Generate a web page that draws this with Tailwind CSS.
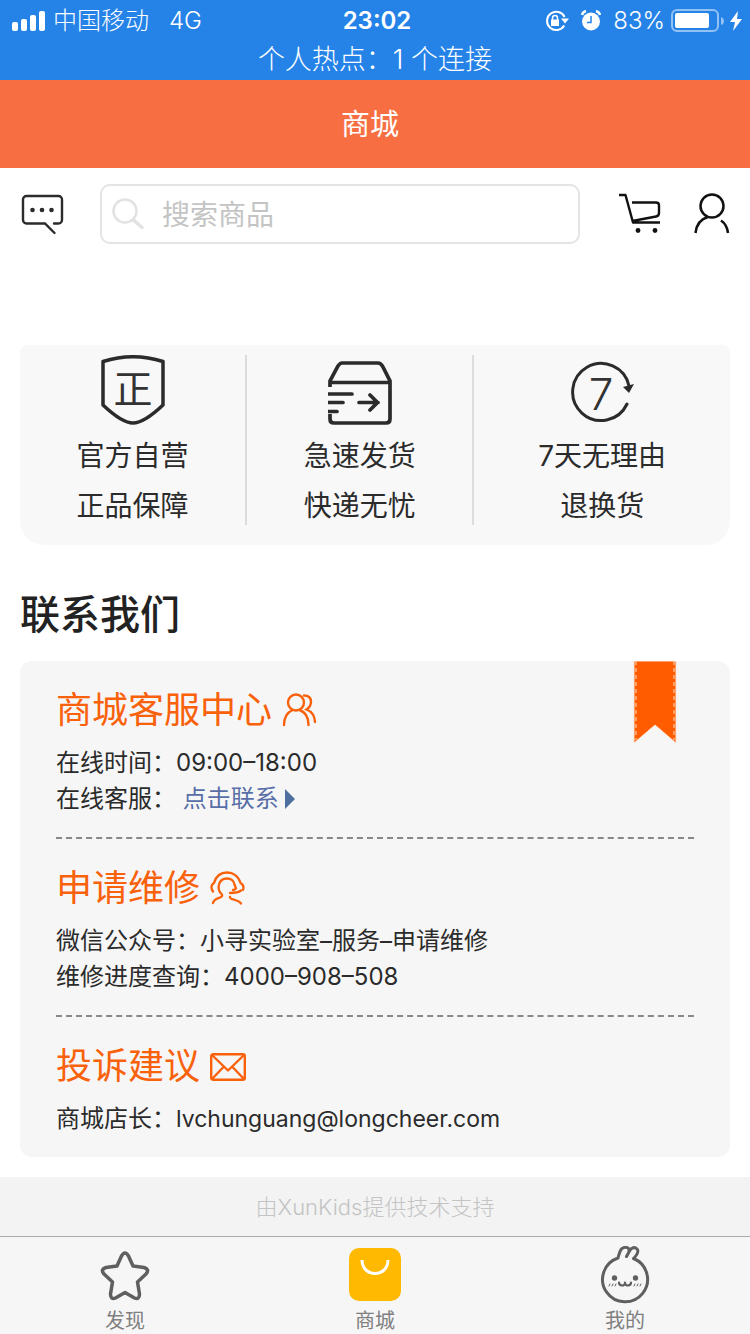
<!DOCTYPE html>
<html lang="zh-CN">
<head>
<meta charset="utf-8">
<meta name="viewport" content="width=device-width, initial-scale=1">
<title>商城</title>
<script src="https://cdn.jsdelivr.net/npm/@tailwindcss/browser@4"></script>
</head>
<body class="flex min-h-screen flex-col bg-white font-['Inter','Noto_Sans_CJK_SC',sans-serif] font-normal text-[#2b2b2b]">

<div class="flex h-20 flex-col bg-[#2583e8] font-light text-white">
  <div class="grid h-[42px] grid-cols-[1fr_auto_1fr] items-center pl-3 pr-2 text-2xl leading-10">
    <div class="flex items-center gap-2">
      <svg class="h-5 w-[33px]" viewBox="0 0 33 20" fill="currentColor" aria-hidden="true">
        <rect x="0" y="11" width="6" height="9" rx="2"/><rect x="9" y="8" width="6" height="12" rx="2"/><rect x="18" y="4" width="6" height="16" rx="2"/><rect x="27" y="0" width="6" height="20" rx="2"/>
      </svg>
      <span>中国移动</span>
      <span class="ml-3">4G</span>
    </div>
    <span class="font-semibold">23:02</span>
    <div class="flex items-center justify-end">
      <svg class="mr-3 h-6 w-6" viewBox="0 0 24 24" fill="none" stroke="currentColor" stroke-width="2" aria-hidden="true">
        <path d="M19.200 16.500A9.200 9.200 0 1 1 19.600 8"/><path d="M16 9.500h8l-4 5z" fill="currentColor" stroke="none"/>
        <rect x="6" y="10.500" width="8" height="6.500" fill="currentColor" stroke="none"/><path d="M7.500 11V9a2.500 2.500 0 0 1 5 0v2" stroke-width="1.500"/>
      </svg>
      <svg class="mr-3 h-6 w-5" viewBox="0 0 20 24" fill="none" stroke="currentColor" aria-hidden="true">
        <circle cx="10" cy="12.500" r="9" fill="currentColor" stroke="none"/><path d="M1 6Q1.500 3 5 2M19 6Q18.500 3 15 2" stroke-width="2.500"/>
        <path d="M10 7v6.500H6" stroke="#2583e8" stroke-width="1.500"/>
      </svg>
      <span class="mr-[6px]">83%</span>
      <svg class="mr-[6px] h-6 w-[53px]" viewBox="0 0 53 24" fill="none" aria-hidden="true">
        <rect x="1" y="1" width="46" height="21" rx="5" stroke="#92c1f3" stroke-width="2"/><rect x="4" y="4" width="34" height="15" rx="2" fill="#fff"/><path d="M50 8q3 1 3 4t-3 4z" fill="#92c1f3"/>
      </svg>
      <svg class="h-5 w-3" viewBox="0 0 12 20" fill="currentColor" aria-hidden="true"><path d="M8 0 0 11h5L3 20 12 8H7z"/></svg>
    </div>
  </div>
  <p class="text-center text-[27px] leading-9">个人热点：1 个连接</p>
</div>

<header class="flex h-[88px] items-center justify-center bg-[#f76e42] pt-[2px] pr-[10px] text-white">
  <h1 class="text-[29px]">商城</h1>
</header>

<main class="flex grow flex-col">
  <form class="flex items-center px-5 pt-4" role="search">
    <button type="button" aria-label="消息">
      <svg class="h-11 w-11" viewBox="0 0 44 44" fill="none" stroke="#2b2b2b" stroke-width="2.400" stroke-linecap="round">
        <path d="M34 31.500h4.500a3.500 3.500 0 0 0 3.500-3.500V7.500A3.500 3.500 0 0 0 38.500 4h-32A3.500 3.500 0 0 0 3 7.500V28a3.500 3.500 0 0 0 3.500 3.500H25l9.500 9.500"/>
        <g fill="#2b2b2b" stroke="none"><circle cx="12.500" cy="18" r="2.300"/><circle cx="22" cy="18" r="2.300"/><circle cx="31.500" cy="18" r="2.300"/></g>
      </svg>
    </button>
    <label class="ml-9 flex h-[60px] grow items-center gap-[14px] rounded-[10px] border-2 border-[#e4e4e4] px-[10px]">
      <svg class="h-9 w-9 shrink-0" viewBox="0 0 36 36" fill="none" stroke="#e2e2e2" aria-hidden="true"><circle cx="13" cy="15" r="11.500" stroke-width="2.500"/><path d="M21.500 24 30 31.500" stroke-width="3.500" stroke-linecap="round"/></svg>
      <input type="search" aria-label="搜索商品" placeholder="搜索商品" class="w-full min-w-0 bg-transparent pt-[2px] text-[28px] outline-none placeholder:text-[#c4c4c4]">
    </label>
    <button type="button" aria-label="购物车" class="ml-9">
      <svg class="h-11 w-12" viewBox="0 0 48 44" fill="none" stroke="#111" stroke-width="2.400" stroke-linejoin="round">
        <path d="M3 3h6.500L17 30.500h27M16 10.500h24q3 0 3 3v7.500q0 3-3 3.500L16.500 29"/>
        <g fill="#111" stroke="none"><circle cx="22" cy="38.500" r="2.400"/><circle cx="39" cy="38.500" r="2.400"/></g>
      </svg>
    </button>
    <button type="button" aria-label="个人中心" class="ml-[26px]">
      <svg class="h-11 w-10" viewBox="0 0 40 44" fill="none" stroke="#111" stroke-width="2.500">
        <circle cx="22" cy="14" r="11.500"/><path d="M5.500 41Q7 28 18 25M31 28.500q6 4 7 12.500"/>
      </svg>
    </button>
  </form>

  <ul class="mx-5 mt-[101px] grid grid-cols-[8fr_8fr_9fr] rounded-t-lg rounded-b-3xl bg-[#f8f8f8] pt-[10px] pb-5 text-center text-[28px] leading-[38px]">
    <li class="flex flex-col items-center gap-3 border-r-2 border-[#dcdcdc]">
      <svg class="h-[70px] w-16" viewBox="0 0 64 70" fill="none" stroke="#2b2b2b" stroke-width="3.500" stroke-linejoin="round" aria-hidden="true">
        <path d="M2 6.500Q32-3 62 6.500V50Q43 68 32 68T2 50z"/>
        <text x="32" y="48" text-anchor="middle" font-size="39" fill="#333" stroke="none">正</text>
      </svg>
      <span>官方自营</span><span>正品保障</span>
    </li>
    <li class="flex flex-col items-center gap-3 border-r-2 border-[#dcdcdc]">
      <svg class="h-[70px] w-16" viewBox="0 0 64 70" fill="none" stroke="#2b2b2b" stroke-width="3.700" aria-hidden="true">
        <path d="M2 32v-6L10 11q2-3 4-3h36q3 0 5 4l7 14v38q0 4-4 4H6q-4 0-4-4v-5M2 27.500h60"/>
        <path d="M0 39h24M0 47.500h15M0 56.500h9M31 47.500h19M42 40l7.500 7.500L42 55" stroke-linecap="round"/>
      </svg>
      <span>急速发货</span><span>快递无忧</span>
    </li>
    <li class="flex flex-col items-center gap-3">
      <svg class="h-[70px] w-16" viewBox="0 0 64 70" fill="none" stroke="#2b2b2b" stroke-width="3" aria-hidden="true">
        <path d="M57 49A28.500 28.500 0 1 1 59 31" stroke-linecap="round"/><path d="m53 32 11-3-5 9z" fill="#2b2b2b" stroke="none"/>
        <text x="31" y="55" text-anchor="middle" font-size="44" font-weight="300" fill="#333" stroke="none">7</text>
      </svg>
      <span>7天无理由</span><span>退换货</span>
    </li>
  </ul>

  <h2 class="mx-5 mt-10 mb-4 text-[40px] leading-[60px] font-medium text-[#222]">联系我们</h2>

  <div class="relative mx-5 rounded-xl bg-[#f6f6f6] px-9 text-2xl leading-9">
    <svg class="absolute top-0 right-[53px] h-[84px] w-11" viewBox="0 0 44 84" aria-hidden="true">
      <path d="M1 0h42v82L22 64 1 82z" fill="#ff5c00" stroke="#ffe3d1" stroke-width="1"/><path d="M3 0v79M41 0v79" stroke="#ffc9a3" stroke-width="1.200" stroke-dasharray="4 3"/>
    </svg>
    <section class="border-b-2 border-dashed border-[#888] pt-[22px] pb-5">
      <h3 class="mb-2 flex items-center gap-[10px] text-4xl leading-[54px] font-normal text-[#f9610a]">商城客服中心
        <svg class="h-9 w-9" viewBox="0 0 36 36" fill="none" stroke="currentColor" stroke-width="2.400" stroke-linecap="round" aria-hidden="true">
          <circle cx="14" cy="10.500" r="8"/><path d="M2 33q0-11 8.500-15M17.500 18Q26.500 21 26.500 33M22 3.500q7 0 7 6.500 0 4.500-4.500 7.500 8 3 8.500 12.500"/>
        </svg>
      </h3>
      <p>在线时间：09:00–18:00</p>
      <p>在线客服： <a href="#" class="inline-flex items-center gap-[6px] text-[#586fa8]">点击联系<svg class="h-5 w-[11px]" viewBox="0 0 11 20" fill="#4f6f9f" aria-hidden="true"><path d="M0 0v20l10-10z"/></svg></a></p>
    </section>
    <section class="border-b-2 border-dashed border-[#888] pt-[22px] pb-5">
      <h3 class="mb-2 flex items-center gap-[10px] text-4xl leading-[54px] font-normal text-[#f9610a]">申请维修
        <svg class="h-9 w-9" viewBox="0 0 36 36" fill="none" stroke="currentColor" stroke-width="2.300" stroke-linecap="round" stroke-linejoin="round" aria-hidden="true">
          <path d="M3 21.500C0 17 2 14 4 13 6 6 11 2.500 17 2.500S28.500 6 30.500 13c3 1.500 3.500 4 2.500 7"/>
          <path d="M3 33c.5-3.500 4-4.500 7-5.500 2-.7 2.500-2 2-3C8.500 21.500 8 18 9 14.500 10 10.500 13 8.500 17 8.500s7 2.500 7.500 6l1.500 4q-1.500 1.500-3 1.500M31 20.500c-3 2.500-6 2.500-11 2.500M20 27c0 2 2 2 5 3s5 1.500 6 3.500"/>
        </svg>
      </h3>
      <p>微信公众号：小寻实验室–服务–申请维修</p>
      <p>维修进度查询：4000–908–508</p>
    </section>
    <section class="pt-[22px] pb-5">
      <h3 class="mb-2 flex items-center gap-[10px] text-4xl leading-[54px] font-normal text-[#f9610a]">投诉建议
        <svg class="mt-[2px] h-7 w-9" viewBox="0 0 36 28" fill="none" stroke="currentColor" stroke-width="2.400" stroke-linejoin="round" aria-hidden="true">
          <rect x="1.200" y="1.200" width="33.600" height="25.600" rx="2"/><path d="m2 2 16 15.500L34 2M2 26l11.500-12M34 26 22.500 14"/>
        </svg>
      </h3>
      <p>商城店长：<span class="text-[23px]">lvchunguang@longcheer.com</span></p>
    </section>
  </div>

  <footer class="mt-5 flex h-[59px] grow items-center justify-center bg-[#f3f3f3] pt-[2px] text-[22px] font-light text-[#c4c4c4]">由XunKids提供技术支持</footer>
</main>

<nav class="grid h-[98px] grid-cols-3 border-t border-[#aaa] bg-[#f6f6f6] text-xl leading-7 text-[#808080]">
  <a href="#" class="flex flex-col items-center pt-[9px]">
    <svg class="h-[61px] w-[60px]" viewBox="0 0 60 61" fill="none" stroke="#5f5f5f" stroke-width="3.500" stroke-linejoin="round" aria-hidden="true">
      <path d="M26.500 10Q30 4 33.500 10L38 20 49 21.500Q55 23.500 51 28L42.500 36 44.500 48Q44.500 54 39.500 52L30 46.500 20.500 52Q15.500 54 15.500 48L17.500 36 9 28Q5 23.500 11 21.500L22 20z"/>
    </svg>发现
  </a>
  <a href="#" aria-current="page" class="flex flex-col items-center pt-[9px]">
    <svg class="h-[61px] w-[60px]" viewBox="0 0 60 61" fill="none" aria-hidden="true">
      <rect x="4" y="2" width="52" height="53" rx="10" fill="#ffb900"/><path d="M17 14C17 32 43 32 43 14" stroke="#fff" stroke-width="3"/>
    </svg>商城
  </a>
  <a href="#" class="flex flex-col items-center pt-[9px]">
    <svg class="h-[61px] w-[60px]" viewBox="0 0 60 61" fill="none" stroke="#5f5f5f" stroke-width="3" stroke-linecap="round" stroke-linejoin="round" aria-hidden="true">
      <path d="M23 12A22.500 22.500 0 1 0 38.500 12.500Q44 7 42.500 3.500C40 0 36 2 34.500 5L31.500 10.500M23 12Q25 4 27 2.500C31 0 35 2 34 5"/>
      <g fill="#5f5f5f" stroke="none"><circle cx="19.500" cy="32" r="2.700"/><circle cx="40.500" cy="32" r="2.700"/></g>
      <path d="M24 36.500C24 40 30 41 30 36.500 30 41 36 40 36 36.500" stroke-width="2.200"/>
      <path d="m14 40 1-2m2 2 1-2m2 2 1-2m18 2 1-2m2 2 1-2m2 2 1-2" stroke-width="1"/>
    </svg>我的
  </a>
</nav>
</body>
</html>
